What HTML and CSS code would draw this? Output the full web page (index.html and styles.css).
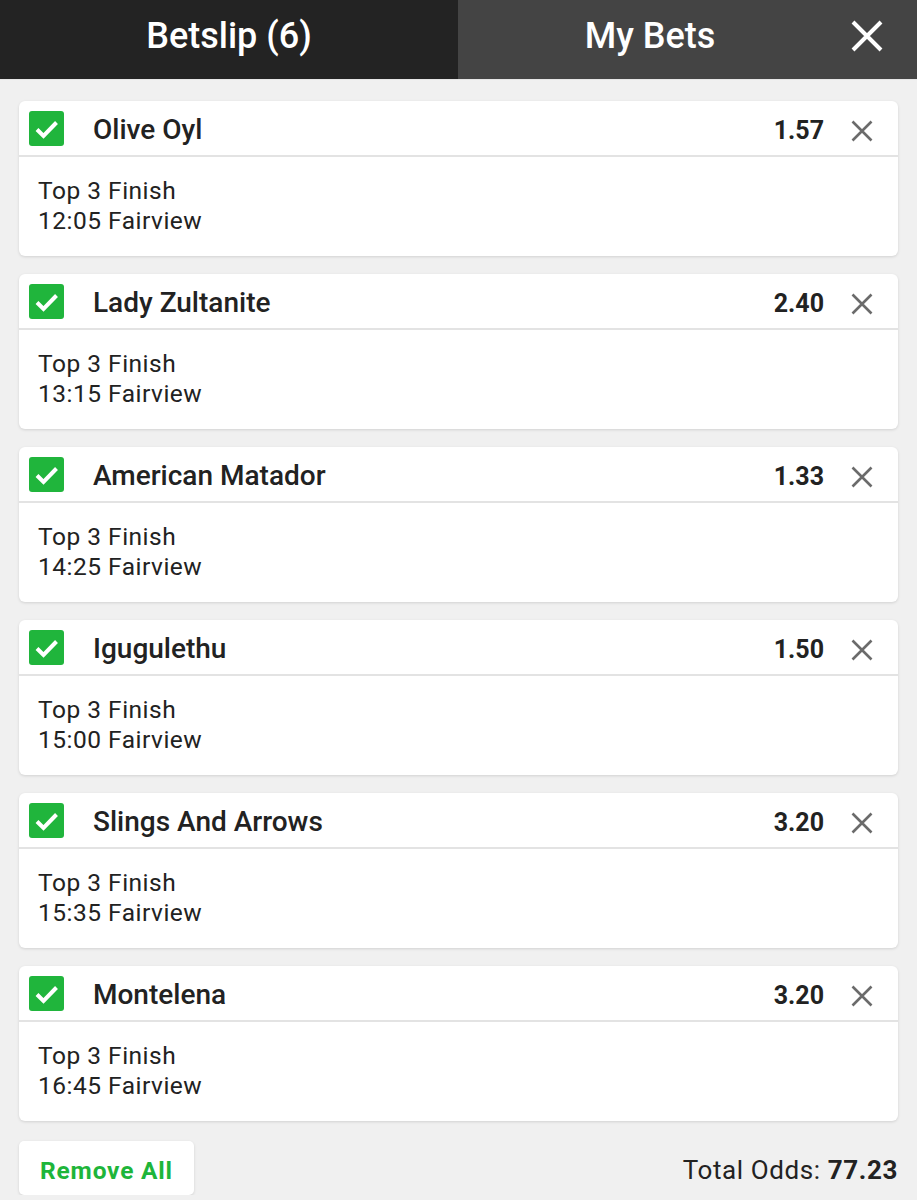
FILE: index.html
```html
<!DOCTYPE html>
<html>
<head>
<meta charset="utf-8">
<link rel="stylesheet" href="styles.css">
</head>
<body>
<header class="tabs">
  <div class="tab tab-active">Betslip (6)</div>
  <div class="tab tab-other">
    <span class="tab-label">My Bets</span>
    <button class="close-btn" aria-label="Close">
      <svg width="32" height="32" viewBox="0 0 32 32"><path d="M2 2 L30 30 M30 2 L2 30" stroke="#fff" stroke-width="4" fill="none"/></svg>
    </button>
  </div>
</header>
<main class="slip">
  <div class="card">
    <div class="card-head">
      <span class="check"><svg width="35" height="35" viewBox="0 0 35 35"><path d="M8 18.5 L14.5 25 L27.5 11.5" stroke="#fff" stroke-width="4" fill="none"/></svg></span>
      <span class="name">Olive Oyl</span>
      <span class="odds">1.57</span>
      <span class="remove"><svg width="22" height="22" viewBox="0 0 22 22"><path d="M1.5 1.5 L20.5 20.5 M20.5 1.5 L1.5 20.5" stroke="#6b6b6b" stroke-width="2.6" fill="none"/></svg></span>
    </div>
    <div class="card-body">
      <div>Top 3 Finish</div>
      <div>12:05 Fairview</div>
    </div>
  </div>
  <div class="card">
    <div class="card-head">
      <span class="check"><svg width="35" height="35" viewBox="0 0 35 35"><path d="M8 18.5 L14.5 25 L27.5 11.5" stroke="#fff" stroke-width="4" fill="none"/></svg></span>
      <span class="name">Lady Zultanite</span>
      <span class="odds">2.40</span>
      <span class="remove"><svg width="22" height="22" viewBox="0 0 22 22"><path d="M1.5 1.5 L20.5 20.5 M20.5 1.5 L1.5 20.5" stroke="#6b6b6b" stroke-width="2.6" fill="none"/></svg></span>
    </div>
    <div class="card-body">
      <div>Top 3 Finish</div>
      <div>13:15 Fairview</div>
    </div>
  </div>
  <div class="card">
    <div class="card-head">
      <span class="check"><svg width="35" height="35" viewBox="0 0 35 35"><path d="M8 18.5 L14.5 25 L27.5 11.5" stroke="#fff" stroke-width="4" fill="none"/></svg></span>
      <span class="name">American Matador</span>
      <span class="odds">1.33</span>
      <span class="remove"><svg width="22" height="22" viewBox="0 0 22 22"><path d="M1.5 1.5 L20.5 20.5 M20.5 1.5 L1.5 20.5" stroke="#6b6b6b" stroke-width="2.6" fill="none"/></svg></span>
    </div>
    <div class="card-body">
      <div>Top 3 Finish</div>
      <div>14:25 Fairview</div>
    </div>
  </div>
  <div class="card">
    <div class="card-head">
      <span class="check"><svg width="35" height="35" viewBox="0 0 35 35"><path d="M8 18.5 L14.5 25 L27.5 11.5" stroke="#fff" stroke-width="4" fill="none"/></svg></span>
      <span class="name">Igugulethu</span>
      <span class="odds">1.50</span>
      <span class="remove"><svg width="22" height="22" viewBox="0 0 22 22"><path d="M1.5 1.5 L20.5 20.5 M20.5 1.5 L1.5 20.5" stroke="#6b6b6b" stroke-width="2.6" fill="none"/></svg></span>
    </div>
    <div class="card-body">
      <div>Top 3 Finish</div>
      <div>15:00 Fairview</div>
    </div>
  </div>
  <div class="card">
    <div class="card-head">
      <span class="check"><svg width="35" height="35" viewBox="0 0 35 35"><path d="M8 18.5 L14.5 25 L27.5 11.5" stroke="#fff" stroke-width="4" fill="none"/></svg></span>
      <span class="name">Slings And Arrows</span>
      <span class="odds">3.20</span>
      <span class="remove"><svg width="22" height="22" viewBox="0 0 22 22"><path d="M1.5 1.5 L20.5 20.5 M20.5 1.5 L1.5 20.5" stroke="#6b6b6b" stroke-width="2.6" fill="none"/></svg></span>
    </div>
    <div class="card-body">
      <div>Top 3 Finish</div>
      <div>15:35 Fairview</div>
    </div>
  </div>
  <div class="card">
    <div class="card-head">
      <span class="check"><svg width="35" height="35" viewBox="0 0 35 35"><path d="M8 18.5 L14.5 25 L27.5 11.5" stroke="#fff" stroke-width="4" fill="none"/></svg></span>
      <span class="name">Montelena</span>
      <span class="odds">3.20</span>
      <span class="remove"><svg width="22" height="22" viewBox="0 0 22 22"><path d="M1.5 1.5 L20.5 20.5 M20.5 1.5 L1.5 20.5" stroke="#6b6b6b" stroke-width="2.6" fill="none"/></svg></span>
    </div>
    <div class="card-body">
      <div>Top 3 Finish</div>
      <div>16:45 Fairview</div>
    </div>
  </div>
  <div class="footer">
    <button class="remove-all">Remove All</button>
    <div class="total">Total Odds: <b>77.23</b></div>
  </div>
</main>
</body>
</html>
```

FILE: styles.css
```css
* { box-sizing: border-box; }
html, body {
  margin: 0;
  padding: 0;
  background: #f0f0f0;
  font-family: Roboto, "Liberation Sans", Arial, sans-serif;
  color: #222;
}
.tabs {
  display: flex;
  height: 80px;
  border-bottom: 1px solid #e6e6e6;
}
.tab {
  display: flex;
  align-items: center;
  justify-content: center;
  color: #fff;
  font-size: 36px;
  font-weight: 500;
  padding-bottom: 8px;
}
.tab-active {
  width: 458px;
  background: #232323;
}
.tab-other {
  flex: 1;
  background: #444444;
  justify-content: flex-start;
}
.tab-label {
  flex: 1;
  text-align: center;
}
.close-btn {
  width: 75px;
  height: 79px;
  margin-bottom: -8px;
  padding: 0 0 8px 9px;
  border: 0;
  background: transparent;
  display: flex;
  align-items: center;
  justify-content: flex-start;
}
.slip {
  padding: 21px 19px 0 19px;
  display: flex;
  flex-direction: column;
  gap: 18px;
}
.card {
  background: #fff;
  border-radius: 6px;
  box-shadow: 0 1px 3px rgba(0,0,0,0.13);
  height: 155px;
}
.card-head {
  height: 56px;
  display: flex;
  align-items: center;
  padding: 0 25px 0 10px;
  border-bottom: 2px solid #e3e3e3;
}
.check {
  width: 35px;
  height: 35px;
  background: #20b53c;
  border-radius: 3px;
  display: flex;
  flex-shrink: 0;
}
.name {
  flex: 1;
  margin-left: 29px;
  font-size: 28px;
  font-weight: 500;
  color: #222;
  padding-top: 2px;
}
.odds {
  font-size: 25px;
  font-weight: 700;
  color: #222;
  padding-top: 4px;
}
.remove {
  margin-left: 27px;
  display: flex;
  padding-top: 6px;
}
.card-body {
  padding: 19px 19px;
  font-size: 24.5px;
  letter-spacing: 0.5px;
  line-height: 30px;
  color: #222;
}
.footer {
  margin-top: 2px;
  display: flex;
  align-items: center;
  justify-content: space-between;
}
.remove-all {
  width: 175px;
  height: 54px;
  background: #fff;
  border: 0;
  border-radius: 5px;
  box-shadow: 0 1px 3px rgba(0,0,0,0.13);
  color: #1eb53a;
  font-family: Roboto, "Liberation Sans", Arial, sans-serif;
  font-size: 24.5px;
  letter-spacing: 0.8px;
  font-weight: 700;
  padding: 4px 0 0 0;
}
.total {
  font-size: 26px;
  letter-spacing: 0.6px;
  color: #222;
  padding-top: 4px;
}
.total b {
  font-weight: 700;
}
```
